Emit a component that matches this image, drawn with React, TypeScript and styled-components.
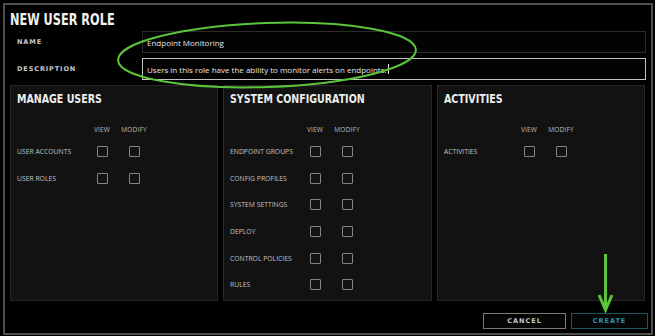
import styled, { createGlobalStyle } from "styled-components";

const GlobalStyle = createGlobalStyle`
   html, body {
      margin: 0;
      padding: 0;
      background: #000;
   }
   body {
      width: 655px;
      height: 336px;
      overflow: hidden;
      font-family: "Open Sans", "DejaVu Sans", sans-serif;
   }
`;

// no condensed face installed, so the headline font gets squeezed by hand
const Frame = styled.div`
   position: relative;
   box-sizing: border-box;
   margin: 3px 0 0 3px;
   width: 650px;
   height: 332px;
   border: 2px solid #4f4f4f;
   padding: 4px 5px 0 5px;
   display: flex;
   flex-direction: column;
`;

const Heading = styled.h1`
   margin: 0;
   height: 22px;
   align-self: flex-start;
   font-family: "DejaVu Sans", sans-serif;
   font-weight: 700;
   font-size: 15.5px;
   line-height: 22px;
   color: #f2f2f2;
   white-space: nowrap;
   transform: scaleX(0.73);
   transform-origin: left center;
`;

const Fields = styled.div`
   display: grid;
   grid-template-columns: 125px 1fr;
   row-gap: 5px;
   padding-left: 7px;
   align-items: center;
`;

const FieldLabel = styled.label`
   font-family: "DejaVu Sans", sans-serif;
   font-weight: 700;
   font-size: 6.5px;
   letter-spacing: 0.9px;
   color: #c8c8c8;
`;

const Input = styled.div<{ $focused?: boolean }>`
   box-sizing: border-box;
   height: 22px;
   display: flex;
   align-items: center;
   padding-left: 4px;
   border: 1px solid ${(p) => (p.$focused ? "#c4c4c4" : "#2c2c2c")};
   background: #030303;
   font-size: 8px;
   color: #e6e6e6;
   white-space: nowrap;
`;

const Caret = styled.span`
   display: inline-block;
   width: 1px;
   height: 10px;
   margin-left: 1px;
   background: #e6e6e6;
`;

const Panels = styled.div`
   margin-top: 5px;
   display: grid;
   grid-template-columns: 208px 209px 208px;
   column-gap: 5px;
   height: 216px;
`;

const Panel = styled.section`
   box-sizing: border-box;
   background: #121212;
   border: 1px solid #272727;
   padding: 5px 0 0 6px;
`;

const PanelTitle = styled.h2`
   margin: 0;
   width: max-content;
   font-family: "DejaVu Sans", sans-serif;
   font-weight: 700;
   font-size: 13px;
   line-height: 15px;
   color: #ededed;
   white-space: nowrap;
   transform: scaleX(0.73);
   transform-origin: left center;
`;

const PermGrid = styled.div`
   margin-top: 14px;
   display: grid;
   grid-template-columns: 75px 20px 44px;
   grid-template-rows: 18px;
   grid-auto-rows: 26.7px;
   align-items: center;
`;

const ColHead = styled.div`
   font-size: 6.6px;
   color: #bdbdbd;
   text-align: center;
   letter-spacing: 0.1px;
`;

const RowLabel = styled.div`
   font-size: 6.8px;
   color: #c2c2c2;
   white-space: nowrap;
`;

const Check = styled.span`
   justify-self: center;
   box-sizing: border-box;
   width: 11px;
   height: 11px;
   border: 1px solid #858585;
   border-radius: 1px;
`;

const Footer = styled.div`
   display: flex;
   justify-content: flex-end;
   gap: 5px;
   margin-top: 12px;
   margin-right: -2px;
`;

const Button = styled.button<{ $primary?: boolean }>`
   box-sizing: border-box;
   height: 16px;
   width: ${(p) => (p.$primary ? "77px" : "83px")};
   background: #050505;
   border: 1px solid ${(p) => (p.$primary ? "#1c5666" : "#7a7a7a")};
   color: ${(p) => (p.$primary ? "#2d93b5" : "#c4c4c4")};
   font-family: "DejaVu Sans", sans-serif;
   font-weight: 700;
   font-size: 6.5px;
   letter-spacing: 1px;
   padding: 0;
`;

const Annotation = styled.svg`
   position: absolute;
   left: -5px;
   top: -5px;
   pointer-events: none;
   overflow: visible;
`;

const sections = [
   { title: "MANAGE USERS", rows: ["USER ACCOUNTS", "USER ROLES"] },
   {
      title: "SYSTEM CONFIGURATION",
      rows: ["ENDPOINT GROUPS", "CONFIG PROFILES", "SYSTEM SETTINGS", "DEPLOY", "CONTROL POLICIES", "RULES"],
   },
   { title: "ACTIVITIES", rows: ["ACTIVITIES"] },
];

export default function App() {
   return (
      <>
         <GlobalStyle />
         <Frame>
            <Heading>NEW USER ROLE</Heading>
            <Fields>
               <FieldLabel>NAME</FieldLabel>
               <Input>Endpoint Monitoring</Input>
               <FieldLabel>DESCRIPTION</FieldLabel>
               <Input $focused>
                  Users in this role have the ability to monitor alerts on endpoints.
                  <Caret />
               </Input>
            </Fields>
            <Panels>
               {sections.map((s) => (
                  <Panel key={s.title}>
                     <PanelTitle>{s.title}</PanelTitle>
                     <PermGrid>
                        <span />
                        <ColHead>VIEW</ColHead>
                        <ColHead>MODIFY</ColHead>
                        {s.rows.map((r) => [
                           <RowLabel key={r}>{r}</RowLabel>,
                           <Check key={r + "-view"} />,
                           <Check key={r + "-modify"} />,
                        ])}
                     </PermGrid>
                  </Panel>
               ))}
            </Panels>
            <Footer>
               <Button>CANCEL</Button>
               <Button $primary>CREATE</Button>
            </Footer>
            <Annotation width="655" height="336">
               <ellipse
                  cx="267"
                  cy="55"
                  rx="149"
                  ry="32"
                  transform="rotate(-2 267 55)"
                  fill="none"
                  stroke="#5bc43a"
                  strokeWidth="2"
               />
               <line x1="605.5" y1="254" x2="605.5" y2="306" stroke="#5bc43a" strokeWidth="3" />
               <path d="M599 295 L605.5 310 L612 295" fill="none" stroke="#5bc43a" strokeWidth="3" />
            </Annotation>
         </Frame>
      </>
   );
}
